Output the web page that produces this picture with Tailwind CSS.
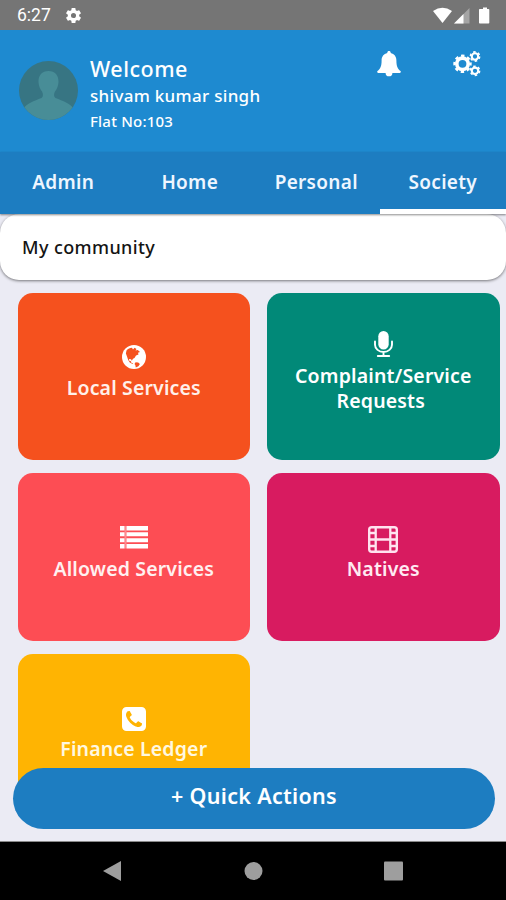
<!DOCTYPE html>
<html lang="en">
<head>
  <meta charset="UTF-8">
  <title>Society</title>
  <script src="https://cdn.jsdelivr.net/npm/@tailwindcss/browser@4"></script>
</head>
<body class="bg-[#ebebf4] font-['Noto_Sans',sans-serif] font-medium">
  <div class="relative flex h-[900px] w-[506px] flex-col overflow-hidden">
    <!-- status bar -->
    <div class="flex h-[30px] shrink-0 items-center bg-[#757575] pl-[17px] pr-[16px] text-white">
      <span class="w-[35px] whitespace-nowrap font-[Roboto,sans-serif] text-[17.5px] font-normal leading-[32px]">6:27</span>
      <svg class="ml-[12px] h-[19px] w-[19px]" viewBox="0 0 24 24" fill="currentColor"><path d="M19.14 12.94c.04-.3.06-.61.06-.94s-.02-.64-.07-.94l2.03-1.58a.49.49 0 0 0 .12-.61l-1.92-3.32a.49.49 0 0 0-.59-.22l-2.39.96a7 7 0 0 0-1.62-.94l-.36-2.54a.48.48 0 0 0-.48-.41h-3.84a.48.48 0 0 0-.47.41l-.36 2.54a7 7 0 0 0-1.62.94l-2.39-.96a.48.48 0 0 0-.59.22L2.74 8.87a.48.48 0 0 0 .12.61l2.03 1.58a6 6 0 0 0 0 1.88l-2.03 1.58a.49.49 0 0 0-.12.61l1.92 3.32c.12.22.37.29.59.22l2.39-.96c.5.38 1.03.7 1.62.94l.36 2.54c.05.24.24.41.48.41h3.84c.24 0 .44-.17.47-.41l.36-2.54a7 7 0 0 0 1.62-.94l2.39.96c.22.08.47 0 .59-.22l1.92-3.32a.48.48 0 0 0-.12-.61zM12 15.2a3.2 3.2 0 1 1 0-6.4 3.2 3.2 0 0 1 0 6.4z"/></svg>
      <svg class="ml-auto h-[17px] w-[57px]" viewBox="0 0 57 17" fill="currentColor">
        <path d="M0 4Q9.500-2.500 19 4L9.500 16z"/>
        <path d="M21 16.500 36.500 1v15.500z" opacity=".35"/>
        <path d="M21 16.500 30.500 7v9.500z"/>
        <path d="M48 2h2V.5h4V2h1.500q.8 0 .8.800v13q0 .8-.8.800h-8.700q-.8 0-.8-.8V2.800q0-.8.800-.8z"/>
      </svg>
    </div>

    <!-- header -->
    <header class="flex h-[122px] shrink-0 bg-[#1e8ad0] pl-[19px] pr-[25px] text-white">
      <svg class="mt-[31px] h-[59px] w-[59px]" viewBox="0 0 59 59">
        <clipPath id="avatar"><circle cx="29.500" cy="29.500" r="29.500"/></clipPath>
        <g clip-path="url(#avatar)">
          <path d="M0 0h59v59H0z" fill="#377583"/>
          <path d="M29.500 10c6.500 0 10.300 4.500 10 11-.2 4-1.500 7-3.500 9.500-1.200 2-1.500 5 .5 6.500C44 40 51 42 55 48v11H4V48c4-6 11-8 18.500-11 2-1.500 1.700-4.500.5-6.500-2-2.500-3.300-5.500-3.500-9.500-.3-6.500 3.500-11 10-11z" fill="#488d97"/>
        </g>
      </svg>
      <div class="ml-[12px] mt-[25px] whitespace-nowrap">
        <div class="text-[21.5px] leading-[28px] tracking-[0.5px]">Welcome</div>
        <div class="text-[17px] leading-[26px] tracking-[0.3px]">shivam kumar singh</div>
        <div class="text-[15px] leading-[25px] tracking-[0.2px]">Flat No:103</div>
      </div>
      <svg class="ml-auto mt-[21px] h-[26px] w-[24px]" viewBox="0 0 24 26" fill="currentColor"><path d="M12 0c1 0 1.700.7 1.700 1.600v.5c3.600.8 5.700 3.700 5.700 7.400 0 5.500 1.200 8.300 4.100 10.600.6.600.3 1.800-.7 1.800h-7.400a3.400 3.400 0 0 1-6.800 0H1.200c-1 0-1.300-1.200-.7-1.800 2.900-2.300 4.100-5.100 4.100-10.600 0-3.700 2.100-6.600 5.700-7.400v-.5C10.300.7 11 0 12 0z"/></svg>
      <svg class="ml-[52px] mt-[21px] h-[26px] w-[28px]" viewBox="0 0 28 26" fill="none" stroke="currentColor">
        <circle cx="9.500" cy="12.800" r="5.700" stroke-width="3.600"/>
        <circle cx="9.500" cy="12.800" r="8" stroke-width="2.400" stroke-dasharray="3.400 2.883" stroke-dashoffset="1.700"/>
        <circle cx="22" cy="5.500" r="3.200" stroke-width="2.100"/>
        <circle cx="22" cy="5.500" r="4.600" stroke-width="1.600" stroke-dasharray="2.500 2.317"/>
        <circle cx="22" cy="19.800" r="3.200" stroke-width="2.100"/>
        <circle cx="22" cy="19.800" r="4.600" stroke-width="1.600" stroke-dasharray="2.500 2.317"/>
      </svg>
    </header>

    <!-- tabs -->
    <nav class="z-10 grid h-[62px] shrink-0 auto-rows-[62px] grid-cols-4 bg-[#1d7dc1] text-center text-[19px] font-semibold leading-[61px] tracking-[0.3px] text-[#eef6ff] shadow-[0_1px_2px_rgba(0,0,0,0.45)]">
      <a>Admin</a>
      <a>Home</a>
      <a>Personal</a>
      <a class="border-b-[5px] border-white">Society</a>
    </nav>

    <div class="h-[66px] shrink-0 rounded-[19px] bg-white pl-[22px] text-[18px] leading-[66px] tracking-[0.4px] text-[#141414] shadow-[0_1px_3px_rgba(0,0,0,0.5)]">My community</div>

    <!-- service tiles -->
    <main class="ml-[17.5px] mt-[12.5px] grid w-[482px] auto-rows-[167.5px] grid-cols-2 gap-x-[17px] gap-y-[13px] text-center text-[19.5px] font-semibold leading-[24.5px] tracking-[0.15px] text-white">
      <div class="flex flex-col items-center justify-center rounded-[15px] bg-[#f5511e] pb-[7px]">
        <svg class="mb-[7px] h-[24px] w-[24px]" viewBox="0 0 24 24">
          <circle cx="12" cy="12" r="12" fill="#fff"/>
          <path d="M4.500 5.500C6 3.800 8 2.800 10 2.800l1 1.600 1.600-1.600 1.900 1.300-1 1.300 2.300-.4 2.200 2-2 .7.500 1.700-2.500 1.200-1.500 2.500-1.500.7-1.200 2-.8-1.500-2-.3.200 1.800 1.800.4.300 1.600 2 .8-.7.500-2.800-1.500-1.600-2.500L5 11.500 3.900 8.500z" fill="#f5511e"/>
          <path d="m13.600 17.200 2.600.2 1.700 1.600-1.500 2.300-2.600 1.200-.5-2.600-.8-1z" fill="#f5511e"/>
        </svg>
        <span class="text-[#fff0ea]">Local Services</span>
      </div>
      <div class="flex flex-col items-center justify-center rounded-[15px] bg-[#018978] pb-[8px]">
        <svg class="mb-[7px] h-[26px] w-[19px]" viewBox="0 0 19 26">
          <rect x="4.300" width="10.400" height="18.500" rx="5.200" fill="#fff"/>
          <path d="M1 10.500v3.300a8.500 7.200 0 0 0 17 0v-3.300M9.500 21v4M3.800 25h11.400" fill="none" stroke="#fff" stroke-width="1.900" stroke-linecap="round"/>
        </svg>
        <span>Complaint/Service<br><span class="pr-[5px]">Requests</span></span>
      </div>
      <div class="flex flex-col items-center justify-center rounded-[15px] bg-[#fd4d54] pb-[7px]">
        <svg class="mb-[8px] h-[23px] w-[28px]" viewBox="0 0 28 23" fill="#fff">
          <path d="M0 0h4.500v4.500H0zM6.500 0H28v4.500H6.500zM0 6.300h4.500v4H0zM6.500 6.300H28v4H6.500zM0 12.200h4.500v4H0zM6.500 12.200H28v4H6.500zM0 18h4.500v4.500H0zM6.500 18H28v4.500H6.500z"/>
          <path d="M4.500 0h2v22.500h-2z" opacity=".35"/>
        </svg>
        <span class="text-[#fff0f0]">Allowed Services</span>
      </div>
      <div class="flex flex-col items-center justify-center rounded-[15px] bg-[#d81b60] pb-[7px]">
        <svg class="mb-[4px] h-[27px] w-[30px]" viewBox="0 0 30 27" fill="none" stroke="#ffe3ef">
          <rect x="1.200" y="1.200" width="27.600" height="24.600" rx="2.500" stroke-width="2.400"/>
          <path d="M7.700 1v25M22.300 1v25M7.700 13.500h14.600" stroke-width="2.300"/>
          <path d="M1 7h6.700M1 13.500h6.700M1 20h6.700M22.300 7H29M22.300 13.500H29M22.300 20H29" stroke-width="2.400"/>
        </svg>
        <span class="text-[#ffeaf2]">Natives</span>
      </div>
      <div class="flex flex-col items-center justify-center rounded-[15px] bg-[#ffb402] pb-[7px]">
        <svg class="mb-[6px] h-[24px] w-[24px]" viewBox="0 0 1536 1536" fill="#fff"><path transform="translate(0 -128)" d="M1280 1193q0-11-2-16-3-8-38.500-29.500t-88.500-49.500l-53-29q-5-3-19-13t-25-15-21-5q-18 0-47 32.500t-57 65.500-44 33q-7 0-16.500-3.500t-15.500-6.500-17-9.500-14-8.500q-99-55-170.500-126.500t-126.500-170.500q-2-3-8.500-14t-9.500-17-6.500-15.500-3.500-16.500q0-13 20.500-33.500t45-38.500 45-39.500 20.500-36.500q0-10-5-21t-15-25-13-19q-3-6-15-28.500t-25-45.500-26.500-47.500-25-40.500-16.500-18-16-2q-48 0-101 22-46 21-80 94.500t-34 130.500q0 16 2.500 34t5 30.500 9 33 10 29.500 12.500 33 11 30q60 164 216.500 320.500t320.500 216.500q6 2 30 11t33 12.500 29.500 10 33 9 30.500 5 34 2.500q57 0 130.500-34t94.500-80q22-53 22-101zm256-777v960q0 119-84.500 203.500t-203.500 84.500h-960q-119 0-203.500-84.500t-84.500-203.500v-960q0-119 84.500-203.500t203.500-84.500h960q119 0 203.500 84.500t84.500 203.500z"/></svg>
        <span class="text-[#fff8e0]">Finance Ledger</span>
      </div>
    </main>

    <!-- floating action + android nav -->
    <button class="absolute bottom-[71px] left-[13px] flex h-[61px] w-[482px] items-center justify-center rounded-full bg-[#1d7dc1] pb-[4px] text-[21.5px] font-semibold tracking-[0.3px] text-white">+ Quick Actions</button>
    <div class="absolute inset-x-0 bottom-0 flex h-[59px] items-center border-t border-[#8a8a8a] bg-black pl-[103px] text-[#9e9e9e]">
      <svg class="h-[21px] w-[301px]" viewBox="0 0 301 21" fill="currentColor">
        <path d="M0 10 18 0v20z"/>
        <circle cx="150.500" cy="10" r="9"/>
        <rect x="281" y=".5" width="19" height="19" rx="1"/>
      </svg>
    </div>
  </div>
</body>
</html>
